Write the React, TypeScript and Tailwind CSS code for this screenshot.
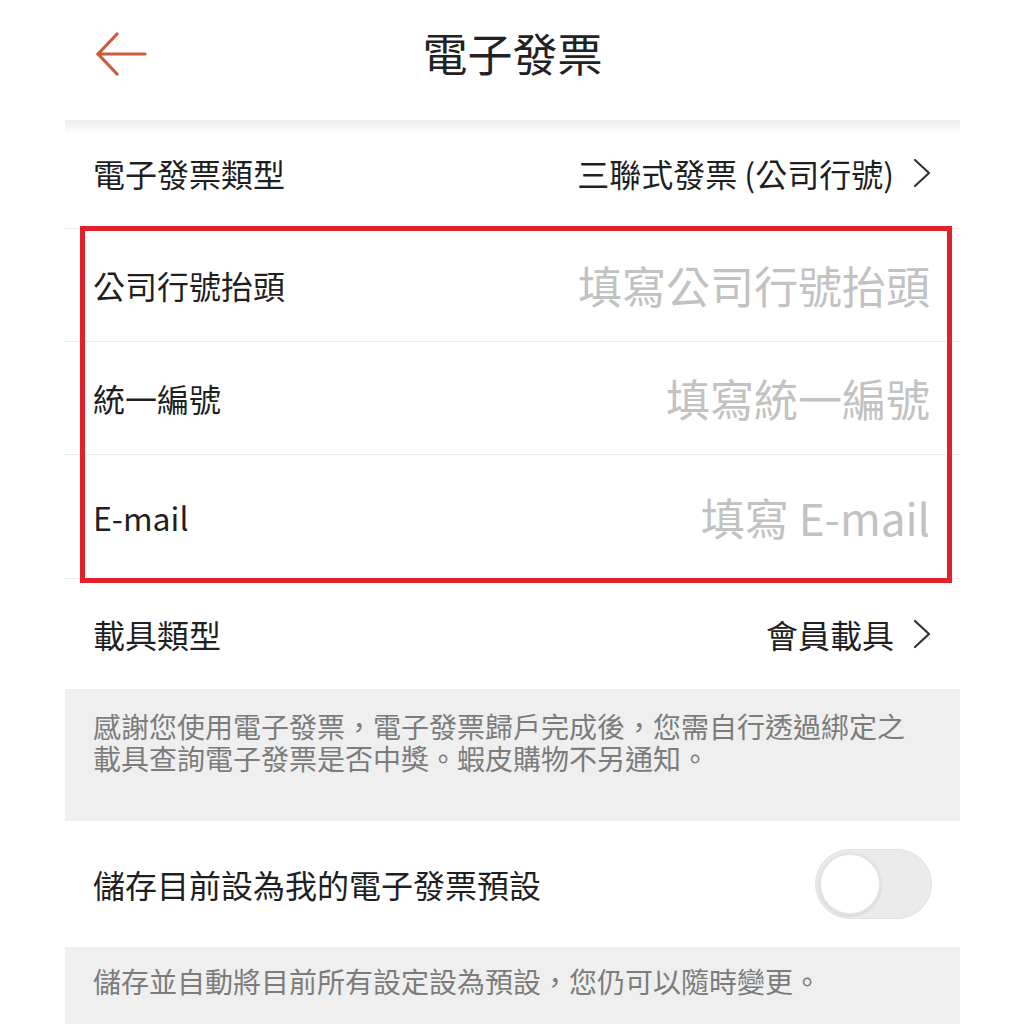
import React from "react";

const font = { fontFamily: '"Noto Sans CJK TC", "Noto Sans", sans-serif' };

function Chevron() {
  return (
    <svg width="20" height="30" viewBox="0 0 20 30" className="ml-[18px] shrink-0">
      <polyline points="3,2 17,15 3,28" fill="none" stroke="#333" strokeWidth="2.2" strokeLinecap="round" strokeLinejoin="round" />
    </svg>
  );
}

function InputRow({ label, placeholder, h, border = true }: { label: string; placeholder: string; h: string; border?: boolean }) {
  return (
    <div className={`flex items-center justify-between pl-[28px] pr-[30px] ${h} ${border ? "border-b border-[#ececec]" : ""}`}>
      <span className="text-[32px] text-[#1f1f1f] leading-none">{label}</span>
      <span className="text-[44px] text-[#c2c2c2] leading-none">{placeholder}</span>
    </div>
  );
}

export default function App() {
  return (
    <div className="w-[1024px] h-[1024px] bg-white overflow-hidden" style={font}>
      <div className="mx-[65px] w-[895px] flex flex-col">
        {/* Header */}
        <div className="relative h-[120px] flex items-center justify-center">
          <svg width="52" height="44" viewBox="0 0 52 44" className="absolute left-[30px] top-[32px]">
            <polyline points="22,2 3,22 22,42" fill="none" stroke="#cc5a3c" strokeWidth="3.2" strokeLinecap="round" strokeLinejoin="round" />
            <line x1="3" y1="22" x2="50" y2="22" stroke="#cc5a3c" strokeWidth="3.2" strokeLinecap="round" />
          </svg>
          <span className="text-[45px] text-[#222] leading-none -mt-[16px]">電子發票</span>
        </div>
        <div className="h-[14px] bg-gradient-to-b from-[#ebebeb] to-white" />
        {/* Row 1 */}
        <div className="h-[97px] flex items-center justify-between pl-[28px] pr-[28px] border-b border-[#ececec] -mt-[2px]">
          <span className="text-[32px] text-[#1f1f1f] leading-none -mt-[14px]">電子發票類型</span>
          <div className="flex items-center -mt-[14px]">
            <span className="text-[32px] text-[#1f1f1f] leading-none">三聯式發票 (公司行號)</span>
            <Chevron />
          </div>
        </div>
        {/* Highlighted rows */}
        <div className="relative">
          <InputRow label="公司行號抬頭" placeholder="填寫公司行號抬頭" h="h-[113px]" />
          <InputRow label="統一編號" placeholder="填寫統一編號" h="h-[113px]" />
          <InputRow label="E-mail" placeholder="填寫 E-mail" h="h-[124px]" />
          <div className="absolute left-[15px] right-[8px] -top-[3px] -bottom-[4px] border-[5px] border-[#e3212b] pointer-events-none" />
        </div>
        {/* Carrier row */}
        <div className="h-[110px] flex items-center justify-between pl-[28px] pr-[28px]">
          <span className="text-[32px] text-[#1f1f1f] leading-none">載具類型</span>
          <div className="flex items-center">
            <span className="text-[32px] text-[#1f1f1f] leading-none">會員載具</span>
            <Chevron />
          </div>
        </div>
        {/* Info */}
        <div className="h-[132px] bg-[#efefef] pl-[28px] pr-[20px] pt-[21px]">
          <p className="text-[28px] leading-[32px] text-[#7c7c7c] whitespace-nowrap">
            感謝您使用電子發票，電子發票歸戶完成後，您需自行透過綁定之
          </p>
          <p className="text-[28px] leading-[32px] text-[#7c7c7c] whitespace-nowrap">
            載具查詢電子發票是否中獎。蝦皮購物不另通知。
          </p>
        </div>
        {/* Toggle row */}
        <div className="h-[126px] flex items-center justify-between pl-[28px] pr-[28px]">
          <span className="text-[32px] text-[#1f1f1f] leading-none">儲存目前設為我的電子發票預設</span>
          <div className="relative w-[117px] h-[70px] rounded-full bg-[#ebebeb] border border-[#e2e2e2]">
            <div className="absolute left-[3px] top-[3px] w-[62px] h-[62px] rounded-full bg-white border-[2px] border-[#e4e4e4] shadow-[0_1px_3px_rgba(0,0,0,0.12)]" />
          </div>
        </div>
        {/* Footer info */}
        <div className="h-[120px] bg-[#efefef] pl-[28px] pr-[28px] pt-[18px]">
          <p className="text-[28px] leading-[32px] text-[#7c7c7c] whitespace-nowrap">儲存並自動將目前所有設定設為預設，您仍可以隨時變更。</p>
        </div>
      </div>
    </div>
  );
}
